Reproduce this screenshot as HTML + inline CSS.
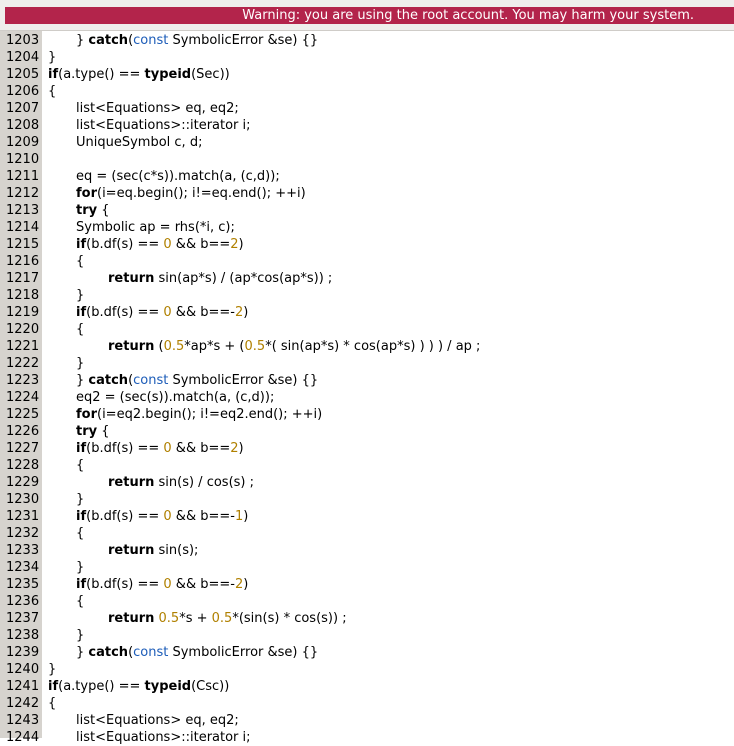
<!DOCTYPE html>
<html><head><meta charset="utf-8"><style>
body{margin:0;width:734px;height:738px;overflow:hidden;background:#fff;font-family:"DejaVu Sans",sans-serif;font-size:13px;}
#top{position:absolute;left:0;top:0;width:734px;height:30px;background:#efeeec;border-bottom:1px solid #cfccc8;}
#warn{position:absolute;left:5px;top:7px;right:0;height:17px;background:#b3244b;color:#fff;font-size:13px;line-height:17px;text-align:right;padding-right:40px;box-sizing:border-box;}
#gut{position:absolute;left:0;top:31px;width:42px;height:707px;background:#d6d3ce;}
#code{position:absolute;left:0;top:31.5px;}
.l{height:17px;line-height:17px;white-space:pre;position:relative;}
.n{position:absolute;left:6px;font-size:13px;}
.c{position:absolute;left:48px;}
.i1{left:76px}.i2{left:108px}
b{font-weight:bold}
.k{color:#1c5cb8}.d{color:#b08000}
</style></head><body>
<div id="top"><div id="warn">Warning: you are using the root account. You may harm your system.</div></div>
<div id="gut"></div>
<div id="code">
<div class="l"><span class="n">1203</span><span class="c i1">} <b>catch</b>(<span class="k">const</span> SymbolicError &amp;se) {}</span></div>
<div class="l"><span class="n">1204</span><span class="c">}</span></div>
<div class="l"><span class="n">1205</span><span class="c"><b>if</b>(a.type() == <b>typeid</b>(Sec))</span></div>
<div class="l"><span class="n">1206</span><span class="c">{</span></div>
<div class="l"><span class="n">1207</span><span class="c i1">list&lt;Equations&gt; eq, eq2;</span></div>
<div class="l"><span class="n">1208</span><span class="c i1">list&lt;Equations&gt;::iterator i;</span></div>
<div class="l"><span class="n">1209</span><span class="c i1">UniqueSymbol c, d;</span></div>
<div class="l"><span class="n">1210</span></div>
<div class="l"><span class="n">1211</span><span class="c i1">eq = (sec(c*s)).match(a, (c,d));</span></div>
<div class="l"><span class="n">1212</span><span class="c i1"><b>for</b>(i=eq.begin(); i!=eq.end(); ++i)</span></div>
<div class="l"><span class="n">1213</span><span class="c i1"><b>try</b> {</span></div>
<div class="l"><span class="n">1214</span><span class="c i1">Symbolic ap = rhs(*i, c);</span></div>
<div class="l"><span class="n">1215</span><span class="c i1"><b>if</b>(b.df(s) == <span class="d">0</span> &amp;&amp; b==<span class="d">2</span>)</span></div>
<div class="l"><span class="n">1216</span><span class="c i1">{</span></div>
<div class="l"><span class="n">1217</span><span class="c i2"><b>return</b> sin(ap*s) / (ap*cos(ap*s)) ;</span></div>
<div class="l"><span class="n">1218</span><span class="c i1">}</span></div>
<div class="l"><span class="n">1219</span><span class="c i1"><b>if</b>(b.df(s) == <span class="d">0</span> &amp;&amp; b==-<span class="d">2</span>)</span></div>
<div class="l"><span class="n">1220</span><span class="c i1">{</span></div>
<div class="l"><span class="n">1221</span><span class="c i2"><b>return</b> (<span class="d">0.5</span>*ap*s + (<span class="d">0.5</span>*( sin(ap*s) * cos(ap*s) ) ) ) / ap ;</span></div>
<div class="l"><span class="n">1222</span><span class="c i1">}</span></div>
<div class="l"><span class="n">1223</span><span class="c i1">} <b>catch</b>(<span class="k">const</span> SymbolicError &amp;se) {}</span></div>
<div class="l"><span class="n">1224</span><span class="c i1">eq2 = (sec(s)).match(a, (c,d));</span></div>
<div class="l"><span class="n">1225</span><span class="c i1"><b>for</b>(i=eq2.begin(); i!=eq2.end(); ++i)</span></div>
<div class="l"><span class="n">1226</span><span class="c i1"><b>try</b> {</span></div>
<div class="l"><span class="n">1227</span><span class="c i1"><b>if</b>(b.df(s) == <span class="d">0</span> &amp;&amp; b==<span class="d">2</span>)</span></div>
<div class="l"><span class="n">1228</span><span class="c i1">{</span></div>
<div class="l"><span class="n">1229</span><span class="c i2"><b>return</b> sin(s) / cos(s) ;</span></div>
<div class="l"><span class="n">1230</span><span class="c i1">}</span></div>
<div class="l"><span class="n">1231</span><span class="c i1"><b>if</b>(b.df(s) == <span class="d">0</span> &amp;&amp; b==-<span class="d">1</span>)</span></div>
<div class="l"><span class="n">1232</span><span class="c i1">{</span></div>
<div class="l"><span class="n">1233</span><span class="c i2"><b>return</b> sin(s);</span></div>
<div class="l"><span class="n">1234</span><span class="c i1">}</span></div>
<div class="l"><span class="n">1235</span><span class="c i1"><b>if</b>(b.df(s) == <span class="d">0</span> &amp;&amp; b==-<span class="d">2</span>)</span></div>
<div class="l"><span class="n">1236</span><span class="c i1">{</span></div>
<div class="l"><span class="n">1237</span><span class="c i2"><b>return</b> <span class="d">0.5</span>*s + <span class="d">0.5</span>*(sin(s) * cos(s)) ;</span></div>
<div class="l"><span class="n">1238</span><span class="c i1">}</span></div>
<div class="l"><span class="n">1239</span><span class="c i1">} <b>catch</b>(<span class="k">const</span> SymbolicError &amp;se) {}</span></div>
<div class="l"><span class="n">1240</span><span class="c">}</span></div>
<div class="l"><span class="n">1241</span><span class="c"><b>if</b>(a.type() == <b>typeid</b>(Csc))</span></div>
<div class="l"><span class="n">1242</span><span class="c">{</span></div>
<div class="l"><span class="n">1243</span><span class="c i1">list&lt;Equations&gt; eq, eq2;</span></div>
<div class="l"><span class="n">1244</span><span class="c i1">list&lt;Equations&gt;::iterator i;</span></div>
</div>
</body></html>
